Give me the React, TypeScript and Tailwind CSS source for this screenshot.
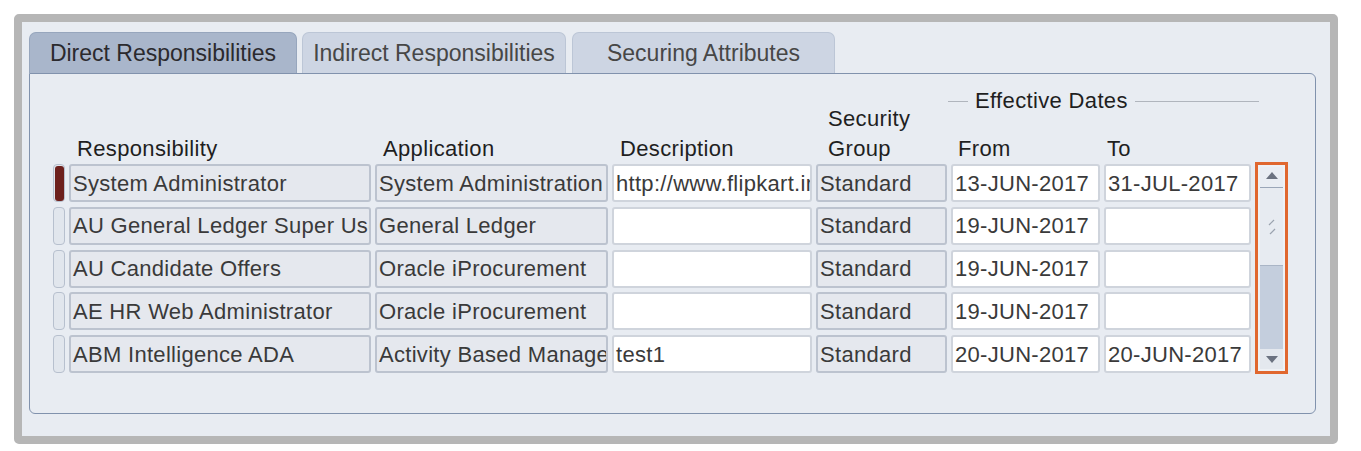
import React from 'react';

type Row = {
  resp: string;
  app: string;
  desc: string;
  group: string;
  from: string;
  to: string;
  current?: boolean;
};

const rows: Row[] = [
  { resp: 'System Administrator', app: 'System Administration', desc: 'http://www.flipkart.in', group: 'Standard', from: '13-JUN-2017', to: '31-JUL-2017', current: true },
  { resp: 'AU General Ledger Super User', app: 'General Ledger', desc: '', group: 'Standard', from: '19-JUN-2017', to: '' },
  { resp: 'AU Candidate Offers', app: 'Oracle iProcurement', desc: '', group: 'Standard', from: '19-JUN-2017', to: '' },
  { resp: 'AE HR Web Administrator', app: 'Oracle iProcurement', desc: '', group: 'Standard', from: '19-JUN-2017', to: '' },
  { resp: 'ABM Intelligence ADA', app: 'Activity Based Management', desc: 'test1', group: 'Standard', from: '20-JUN-2017', to: '20-JUN-2017' },
];

const cols = 'grid grid-cols-[12px_302px_233px_200px_131px_149px_147px_33px] gap-x-[4px]';

// read-only (grey) and editable (white) text items
function Field({ value, editable }: { value: string; editable?: boolean }) {
  return (
    <div
      className={`h-[38px] flex items-center overflow-hidden whitespace-nowrap rounded-[3px] border-2 pl-[2px] text-[22px] tracking-[0.3px] text-[#3a3a3a] ${
        editable ? 'bg-white border-[#cfd4dc]' : 'bg-[#e5e8ee] border-[#bcc3cf]'
      }`}
    >
      {value}
    </div>
  );
}

function Tab({ label, active, width }: { label: string; active?: boolean; width: string }) {
  return (
    <div
      className={`${width} h-[41px] flex items-center justify-center rounded-t-[7px] border border-b-0 text-[23px] ${
        active
          ? 'bg-[#a9b6cb] border-[#97a6bd] text-[#2b2a2e]'
          : 'bg-[#cdd5e3] border-[#bcc6d6] text-[#474747]'
      }`}
    >
      {label}
    </div>
  );
}

function ScrollBar() {
  return (
    <div className="row-span-5 -mt-[2px] -mb-[1px] border-[3px] border-[#e0672f] p-[2px] bg-[#eef1f5] flex">
      <div className="flex-1 flex flex-col bg-[#e7ebf1]">
        <div className="h-[21px] flex items-start justify-center pt-[5px] border-b border-[#9aa6b8] bg-[#e9edf3]">
          <svg width="12" height="7" viewBox="0 0 12 7">
            <path d="M6 0 L12 7 L0 7 Z" fill="#6b7280" />
          </svg>
        </div>
        <div className="h-[78px] flex items-center justify-center border-b border-[#aab5c6]">
          <svg width="12" height="20" viewBox="0 0 12 20">
            <path d="M3 8 L8 3" stroke="#9aa2ae" strokeWidth="1.2" />
            <path d="M4 17 L9 12" stroke="#9aa2ae" strokeWidth="1.2" />
          </svg>
        </div>
        <div className="flex-1 bg-[#c4cedd]" />
        <div className="h-[20px] flex items-center justify-center bg-[#e4e8ee]">
          <svg width="12" height="7" viewBox="0 0 12 7">
            <path d="M0 0 L12 0 L6 7 Z" fill="#6b7280" />
          </svg>
        </div>
      </div>
    </div>
  );
}

export default function App() {
  return (
    <div
      className="w-[1361px] h-[451px] bg-white pl-[14px] pt-[14px]"
      style={{ fontFamily: '"Liberation Sans", Arial, sans-serif' }}
    >
      {/* window frame */}
      <div className="w-[1324px] h-[430px] rounded-[5px] border-[8px] border-[#b6b6b6] bg-[#e8ecf2] pl-[7px] pt-[10px]">
        {/* tabs */}
        <div className="flex items-end">
          <Tab label="Direct Responsibilities" active width="w-[268px]" />
          <div className="w-[5px]" />
          <Tab label="Indirect Responsibilities" width="w-[264px]" />
          <div className="w-[6px]" />
          <Tab label="Securing Attributes" width="w-[263px]" />
        </div>

        {/* tab panel */}
        <div className="w-[1287px] h-[341px] rounded-b-[6px] rounded-tr-[6px] border border-[#8192ad] pl-[23px]">
          {/* column headers */}
          <div className={`${cols} h-[90px] items-end whitespace-nowrap text-[22px] leading-[30px] tracking-[0.35px] text-[#1f1f1f]`}>
            <div />
            <div className="pl-[8px]">Responsibility</div>
            <div className="pl-[8px]">Application</div>
            <div className="pl-[8px]">Description</div>
            <div className="pl-[12px]">
              Security
              <br />
              Group
            </div>
            <div className="col-span-2 flex flex-col">
              <div className="flex items-center h-[30px] -ml-[3px]">
                <div className="w-[20px] h-px shrink-0 bg-[#b0b5bd]" />
                <div className="px-[7px] shrink-0">Effective Dates</div>
                <div className="w-[124px] h-px shrink-0 bg-[#b0b5bd]" />
              </div>
              <div className="mt-[18px] grid grid-cols-[149px_147px] gap-x-[4px]">
                <div className="pl-[7px]">From</div>
                <div className="pl-[3px]">To</div>
              </div>
            </div>
            <div />
          </div>

          {/* rows */}
          <div className={`${cols} gap-y-[4.75px]`}>
            {rows.map((r, i) => (
              <React.Fragment key={i}>
                <div className="h-[38px] rounded-[4px] border border-[#b7c0ce] bg-[#e1e6ed] flex items-center justify-center">
                  {r.current && <div className="w-[9px] h-[35px] rounded-[3px] bg-[#6d201c]" />}
                </div>
                <Field value={r.resp} />
                <Field value={r.app} />
                <Field value={r.desc} editable />
                <Field value={r.group} />
                <Field value={r.from} editable />
                <Field value={r.to} editable />
                {i === 0 && <ScrollBar />}
              </React.Fragment>
            ))}
          </div>
        </div>
      </div>
    </div>
  );
}
